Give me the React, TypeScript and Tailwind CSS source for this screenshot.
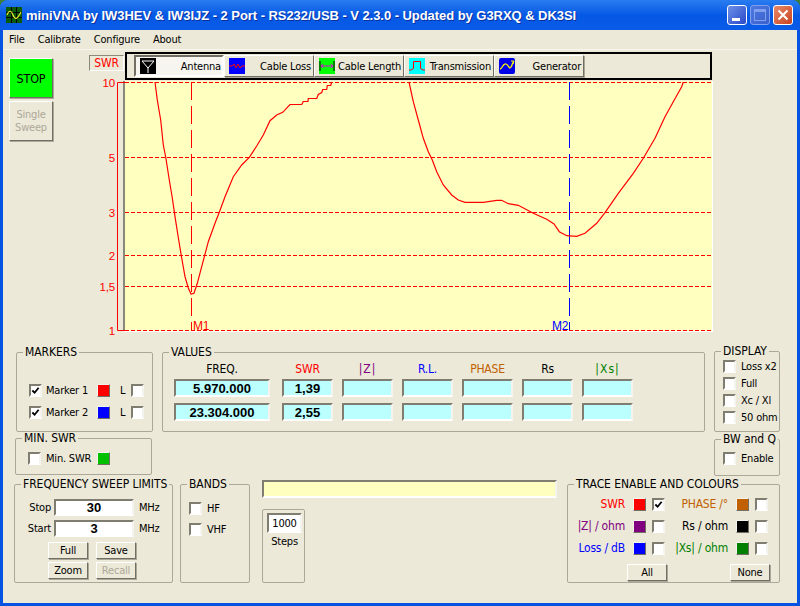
import React from 'react';

const sunken = 'border-2 border-t-[#7f7d6f] border-l-[#7f7d6f] border-r-[#f4f3ee] border-b-[#ffffff]';
const raised = 'border border-t-white border-l-white border-r-[#716f64] border-b-[#716f64] shadow-[1px_1px_0_#aca899]';

const trace1 =
  '155,82 157.3,100 160.7,120 163.3,145 165.7,157 169.3,180 172.3,198 175,216.7 178.7,240 181.7,258 185,276.7 188.3,288 191,294 194,293.3 197.3,283.3 201.7,266.7 208.3,241.7 215,223.3 219.3,212.3 225,196.7 233.3,176.7 241.7,165 249.3,157.3 256.7,146 263.3,135 270,120.7 276.7,115 282.7,112.3 290,104.5 301.7,104.5 303.3,101.5 308,101.5 308.3,98.5 316.7,98.5 318.3,94.5 321.7,92.5 322.7,89.5 326.7,89.5 327.3,85.5 330.7,85.5 331.7,82';
const trace2 =
  '409,82 413.3,101.7 418.3,120 423.3,138.3 428.3,151.7 432.3,160 436.7,171.7 443.3,185 451.7,195 458.3,200 465,202.3 483.3,202.3 496.7,200.3 501.7,200.3 508.3,203.7 518.3,205.3 533.3,213.3 546.7,219.3 554,224 559.3,231.7 566.7,235.7 576.7,236.3 585,233.3 596.7,223.3 605,212.7 618.3,193.3 633.3,173.3 643.3,158.3 655,138.3 665,116.7 673.3,101.7 681.7,86.7 683.3,82';

const gridLines = [
  { y: 82.5, label: '10' },
  { y: 157.5, label: '5' },
  { y: 212.5, label: '3' },
  { y: 255.5, label: '2' },
  { y: 286.5, label: '1,5' },
  { y: 330.5, label: '1' },
];

function Chart() {
  return (
    <svg viewBox="96 72 620 272" width={620} height={272} className="block">
      <rect x="125" y="81" width="587" height="250" fill="#ffffc0" />
      <path d="M124 81V331" stroke="#8a887a" strokeWidth="2" />
      <path d="M712.5 81V332M124 331.5H713" stroke="#ffffff" />
      <path d="M125 82.5H117.5V330.5H125" fill="none" stroke="#ff0000" />
      {gridLines.map((g) => (
        <g key={g.label}>
          <line x1="125" x2="712" y1={g.y} y2={g.y} stroke="#ff0000" strokeDasharray="4 2" />
          <text
            x="115"
            y={g.y + 4}
            textAnchor="end"
            fill="#ff0000"
            fontSize="11.5"
            fontFamily="Liberation Sans, sans-serif"
          >
            {g.label}
          </text>
        </g>
      ))}
      <line x1="191.5" x2="191.5" y1="82" y2="330" stroke="#ff0000" strokeDasharray="18 6" />
      <line x1="569.5" x2="569.5" y1="82" y2="330" stroke="#0000ff" strokeDasharray="18 6" />
      <polyline points={trace1} fill="none" stroke="#ff0000" strokeWidth="1.2" />
      <polyline points={trace2} fill="none" stroke="#ff0000" strokeWidth="1.2" />
      <text x="193" y="330" fill="#ff0000" fontSize="12" fontFamily="Liberation Sans, sans-serif">
        M1
      </text>
      <text x="552" y="330" fill="#0000ff" fontSize="12" fontFamily="Liberation Sans, sans-serif">
        M2
      </text>
    </svg>
  );
}

function AppIcon() {
  return (
    <svg viewBox="0 0 16 16" className="w-4 h-4 shrink-0">
      <rect width="16" height="16" fill="#0a5a0a" />
      <path d="M0 5.5H16M0 10.5H16M5.5 0V16M10.5 0V16" stroke="#000" />
      <path d="M1 8C3 3 5 3 7 8S11 13 15 5" fill="none" stroke="#e8e830" strokeWidth="1.2" />
    </svg>
  );
}

function AntennaIcon() {
  return (
    <svg viewBox="0 0 16 16" className="w-4 h-4 shrink-0">
      <rect width="16" height="16" fill="#000" />
      <path d="M2 3H14L8 10ZM8 10V15" fill="none" stroke="#fff" />
    </svg>
  );
}

function LossIcon() {
  return (
    <svg viewBox="0 0 16 16" className="w-4 h-4 shrink-0">
      <rect width="16" height="16" fill="#0000ff" />
      <path d="M0 8H3L5 6L7 10L9 6L11 10L13 8H16" fill="none" stroke="#ff0000" />
    </svg>
  );
}

function LengthIcon() {
  return (
    <svg viewBox="0 0 16 16" className="w-4 h-4 shrink-0">
      <rect width="16" height="16" fill="#00ff00" />
      <path d="M1 3V13M15 3V13" stroke="#000" strokeWidth="1" />
      <path d="M2 8H14M4 6L2 8L4 10M12 6L14 8L12 10" fill="none" stroke="#e000e0" />
    </svg>
  );
}

function PulseIcon() {
  return (
    <svg viewBox="0 0 16 16" className="w-4 h-4 shrink-0">
      <rect width="16" height="16" fill="#00ffff" />
      <path d="M0 12H2L4.5 10.5V3.5H11.5V10.5L14 12H16" fill="none" stroke="#ff0000" />
    </svg>
  );
}

function GeneratorIcon() {
  return (
    <svg viewBox="0 0 16 16" className="w-4 h-4 shrink-0">
      <rect width="16" height="16" rx="2" fill="#0000e8" />
      <path d="M1 11C3 11 4 5 7 6S10 12 12 9S13 4 15 4" fill="none" stroke="#ffff00" strokeWidth="1.3" />
      <path d="M12 3L15 3L14 6" fill="none" stroke="#ffff00" />
    </svg>
  );
}

function WindowButtons() {
  return (
    <div className="flex gap-[3px]">
      <div className="w-[20px] h-[20px] rounded-[3px] border border-white bg-gradient-to-br from-[#6f8fe8] to-[#2a48c8] flex items-end pl-[4px] pb-[3px]">
        <div className="w-[8px] h-[3px] bg-white" />
      </div>
      <div className="w-[20px] h-[20px] rounded-[3px] border border-[#7fa0ee] bg-gradient-to-br from-[#4d78e0] to-[#3a60cc] flex items-center justify-center">
        <div className="w-[12px] h-[12px] border border-[#7fa0ee] border-t-[3px]" />
      </div>
      <div className="w-[20px] h-[20px] rounded-[3px] border border-white bg-gradient-to-br from-[#e88a68] to-[#c8401c] flex items-center justify-center">
        <svg viewBox="0 0 12 12" className="w-[12px] h-[12px]">
          <path d="M1.5 1.5L10.5 10.5M10.5 1.5L1.5 10.5" stroke="#fff" strokeWidth="2" />
        </svg>
      </div>
    </div>
  );
}

function ToolButton({ icon, text, pressed }: { icon: React.ReactNode; text: string; pressed?: boolean }) {
  return (
    <div
      className={
        pressed
          ? 'w-[90px] h-[22px] flex items-center justify-between pl-[4px] pr-[1px] bg-[#f6f5ef] border-2 border-t-[#716f64] border-l-[#716f64] border-r-white border-b-white'
          : 'w-[90px] h-[22px] flex items-center justify-between pl-[4px] pr-[2px] bg-[#ece9d8] border border-t-white border-l-white border-r-[#716f64] border-b-[#716f64] shadow-[1px_1px_0_#aca899]'
      }
    >
      {icon}
      <span className="whitespace-nowrap">{text}</span>
    </div>
  );
}

function Check({ checked }: { checked?: boolean }) {
  return (
    <div className={`w-[13px] h-[13px] shrink-0 bg-white flex items-center justify-center ${sunken}`}>
      {checked && (
        <svg viewBox="0 0 10 10" className="w-[9px] h-[9px]">
          <path d="M1.5 5L4 7.5L8.5 2" fill="none" stroke="#000" strokeWidth="2" />
        </svg>
      )}
    </div>
  );
}

function Swatch({ color }: { color: string }) {
  return (
    <div
      className={`w-[13px] h-[13px] shrink-0 border border-t-[#f4f3ee] border-l-[#f4f3ee] border-r-[#716f64] border-b-[#716f64] ${color}`}
    />
  );
}

function Group({ title, className, children }: { title: string; className: string; children: React.ReactNode }) {
  return (
    <fieldset className={`border border-[#aca899] rounded-[2px] shrink-0 min-w-0 ${className}`}>
      <legend className="ml-[6px] px-[2px] text-[12px] tracking-[-0.05px] leading-[14px] whitespace-nowrap">{title}</legend>
      {children}
    </fieldset>
  );
}

function SmallButton({ text, disabled, className }: { text: string; disabled?: boolean; className?: string }) {
  return (
    <div
      className={`w-[40px] h-[17px] flex items-center justify-center ${raised} ${
        disabled ? 'text-[#aca899]' : 'text-black'
      } ${className ?? ''}`}
    >
      {text}
    </div>
  );
}

function CheckRow({ label }: { label: string }) {
  return (
    <div className="flex items-center gap-[5px]">
      <Check />
      <span className="whitespace-nowrap">{label}</span>
    </div>
  );
}

function ValueCell({ text, className }: { text?: string; className?: string }) {
  return (
    <div
      className={`h-[18px] bg-[#bbffff] flex items-center justify-center font-['Liberation_Sans',sans-serif] text-[13px] tracking-normal font-bold text-black ${sunken} ${className ?? ''}`}
    >
      {text}
    </div>
  );
}

function TraceItem({ label, color, swatch, checked, className }: {
  label: string;
  color: string;
  swatch: string;
  checked?: boolean;
  className?: string;
}) {
  return (
    <div className={`flex items-center justify-end ${className ?? ''}`}>
      <span className={`whitespace-nowrap text-[12px] mr-[8px] ${color}`}>{label}</span>
      <Swatch color={swatch} />
      <div className="ml-[6px]">
        <Check checked={checked} />
      </div>
    </div>
  );
}

const valueHeaders = [
  { text: 'FREQ.', color: 'text-black' },
  { text: 'SWR', color: 'text-[#ff0000]' },
  { text: '|Z|', color: 'text-[#800080] tracking-[1px]' },
  { text: 'R.L.', color: 'text-[#0000ff]' },
  { text: 'PHASE', color: 'text-[#c06000]' },
  { text: 'Rs', color: 'text-black' },
  { text: '|Xs|', color: 'text-[#008000] tracking-[1px]' },
];

export default function App() {
  return (
    <div className="w-[800px] h-[606px] bg-[#3f7f3a] font-['DejaVu_Sans_Condensed','Liberation_Sans',sans-serif] text-[11px] leading-[13px] tracking-[-0.2px] text-black overflow-hidden">
      <div className="h-[606px] rounded-t-[8px] bg-[#0553e0] flex flex-col overflow-hidden">
        <div className="h-[30px] shrink-0 bg-gradient-to-b from-[#2a7cf0] via-[#0558e4] to-[#0a5ce8] flex items-center pl-[6px] pr-[7px]">
          <AppIcon />
          <span className="ml-[4px] flex-1 font-['Liberation_Sans',sans-serif] text-white font-bold text-[13px] whitespace-nowrap tracking-[-0.05px] [text-shadow:1px_1px_0_#0a2f9c]">
            miniVNA by IW3HEV &amp; IW3IJZ - 2 Port - RS232/USB - V 2.3.0 - Updated by G3RXQ &amp; DK3SI
          </span>
          <WindowButtons />
        </div>

        <div className="mx-[3px] mb-[3px] flex-1 bg-[#ece9d8] flex flex-col">
          <div className="h-[20px] shrink-0 flex items-center pl-[6px] gap-[13px] border-b border-[#f6f5ee]">
            <span>File</span>
            <span>Calibrate</span>
            <span>Configure</span>
            <span>About</span>
          </div>

          <div className="h-[295px] shrink-0 flex">
            <div className="w-[86px] shrink-0 pl-[6px] pt-[8px] flex flex-col gap-[3px]">
              <div className={`w-[44px] h-[40px] bg-[#00ff00] flex items-center justify-center text-[12.5px] ${raised}`}>STOP</div>
              <div className={`w-[44px] h-[40px] flex items-center justify-center text-center text-[#aca899] ${raised}`}>
                Single Sweep
              </div>
            </div>
            <div className="flex flex-col">
              <div className="flex mt-[2px]">
                <div className="w-[35px] h-[16px] mt-[3px] flex items-center justify-center text-[12px] text-[#ff0000] border border-t-[#8a887a] border-l-[#8a887a] border-r-white border-b-white">
                  SWR
                </div>
                <div className="ml-[1px] w-[587px] h-[28px] border-2 border-black bg-[#ece9d8] flex pl-[7px] pt-[1px]">
                  <ToolButton icon={<AntennaIcon />} text="Antenna" pressed />
                  <ToolButton icon={<LossIcon />} text="Cable Loss" />
                  <ToolButton icon={<LengthIcon />} text="Cable Length" />
                  <ToolButton icon={<PulseIcon />} text="Transmission" />
                  <ToolButton icon={<GeneratorIcon />} text="Generator" />
                </div>
              </div>
              <div className="ml-[7px] -mt-[8px]">
                <Chart />
              </div>
            </div>
          </div>

          <div className="h-[132px] shrink-0 flex items-start pl-[13px]">
            <div className="w-[137px] shrink-0 flex flex-col">
              <Group title="MARKERS" className="w-[137px] h-[87px]">
                <div className="pt-[25px] pl-[12px] flex flex-col gap-[9px]">
                  <div className="flex items-center">
                    <Check checked />
                    <span className="ml-[4px] w-[51px]">Marker 1</span>
                    <Swatch color="bg-[#ff0000]" />
                    <span className="ml-[10px] w-[11px]">L</span>
                    <Check />
                  </div>
                  <div className="flex items-center">
                    <Check checked />
                    <span className="ml-[4px] w-[51px]">Marker 2</span>
                    <Swatch color="bg-[#0000ff]" />
                    <span className="ml-[10px] w-[11px]">L</span>
                    <Check />
                  </div>
                </div>
              </Group>
              <Group title="MIN. SWR" className="w-[137px] h-[44px] -ml-px -mt-[1px]">
                <div className="pt-[7px] pl-[12px] flex items-center">
                  <Check />
                  <span className="ml-[5px] w-[51px] whitespace-nowrap">Min. SWR</span>
                  <Swatch color="bg-[#00c000]" />
                </div>
              </Group>
            </div>

            <Group title="VALUES" className="w-[543px] h-[87px] ml-[9px]">
              <div className="ml-[11px] grid grid-cols-[99px_repeat(6,51px)] grid-rows-[14px_18px_18px] gap-y-[6px] gap-x-[9px]">
                {valueHeaders.map((h, i) => (
                  <div key={h.text} className={`text-center text-[12px] leading-[20px] ${i === 0 ? 'w-[96px]' : ''} ${h.color}`}>
                    {h.text}
                  </div>
                ))}
                <ValueCell text="5.970.000" className="w-[96px]" />
                <ValueCell text="1,39" />
                <ValueCell />
                <ValueCell />
                <ValueCell />
                <ValueCell />
                <ValueCell />
                <ValueCell text="23.304.000" className="w-[96px]" />
                <ValueCell text="2,55" />
                <ValueCell />
                <ValueCell />
                <ValueCell />
                <ValueCell />
                <ValueCell />
              </div>
            </Group>

            <div className="w-[66px] shrink-0 ml-[9px] flex flex-col -mt-[1px]">
              <Group title="DISPLAY" className="w-[66px] h-[88px]">
                <div className="pl-[8px] pt-[2px] flex flex-col gap-[4px]">
                  <CheckRow label="Loss x2" />
                  <CheckRow label="Full" />
                  <CheckRow label="Xc / Xl" />
                  <CheckRow label="50 ohm" />
                </div>
              </Group>
              <Group title="BW and Q" className="w-[66px] h-[44px]">
                <div className="pl-[8px] pt-[6px]">
                  <CheckRow label="Enable" />
                </div>
              </Group>
            </div>
          </div>

          <div className="flex items-start pl-[11px]">
            <Group title="FREQUENCY SWEEP LIMITS" className="w-[159px] h-[106px]">
              <div className="pt-[8px] flex flex-col gap-[4px]">
                <div className="flex items-center">
                  <span className="w-[36px] text-right">Stop</span>
                  <div className={`ml-[3px] w-[80px] h-[17px] bg-white flex items-center justify-center font-['Liberation_Sans',sans-serif] text-[13px] tracking-normal font-bold ${sunken}`}>30</div>
                  <span className="ml-[5px]">MHz</span>
                </div>
                <div className="flex items-center">
                  <span className="w-[36px] text-right">Start</span>
                  <div className={`ml-[3px] w-[80px] h-[17px] bg-white flex items-center justify-center font-['Liberation_Sans',sans-serif] text-[13px] tracking-normal font-bold ${sunken}`}>3</div>
                  <span className="ml-[5px]">MHz</span>
                </div>
              </div>
              <div className="mt-[5px] pl-[33px] grid grid-cols-[40px_40px] gap-x-[8px] gap-y-[3px]">
                <SmallButton text="Full" />
                <SmallButton text="Save" />
                <SmallButton text="Zoom" />
                <SmallButton text="Recall" disabled />
              </div>
            </Group>

            <Group title="BANDS" className="w-[70px] h-[106px] ml-[7px]">
              <div className="pt-[11px] pl-[8px] flex flex-col gap-[8px]">
                <CheckRow label="HF" />
                <CheckRow label="VHF" />
              </div>
            </Group>

            <div className="w-[295px] ml-[12px] shrink-0 pt-[3px]">
              <div className={`h-[18px] bg-[#ffffc0] ${sunken}`} />
              <div className="mt-[11px] w-[43px] h-[74px] border border-[#aca899] rounded-[2px] pt-[3px] pl-[4px]">
                <div className={`w-[35px] h-[20px] bg-white flex items-center justify-center ${sunken}`}>1000</div>
                <div className="mt-[2px] w-[35px] text-center">Steps</div>
              </div>
            </div>

            <Group title="TRACE ENABLE AND COLOURS" className="w-[213px] h-[106px] ml-[10px]">
              <div className="pt-[7px] grid grid-cols-[97px_103px] gap-y-[9px]">
                <TraceItem label="SWR" color="text-[#ff0000]" swatch="bg-[#ff0000]" checked />
                <TraceItem label="PHASE /°" color="text-[#c06000]" swatch="bg-[#c06000]" className="-mt-px" />
                <TraceItem label="|Z| / ohm" color="text-[#800080]" swatch="bg-[#800080]" />
                <TraceItem label="Rs / ohm" color="text-black" swatch="bg-black" className="-mt-px" />
                <TraceItem label="Loss / dB" color="text-[#0000ff]" swatch="bg-[#0000ff]" />
                <TraceItem label="|Xs| / ohm" color="text-[#008000]" swatch="bg-[#008000]" className="-mt-px" />
              </div>
              <div className="mt-[9px] pl-[59px] flex gap-[63px]">
                <SmallButton text="All" />
                <SmallButton text="None" />
              </div>
            </Group>
          </div>
        </div>
      </div>
    </div>
  );
}
